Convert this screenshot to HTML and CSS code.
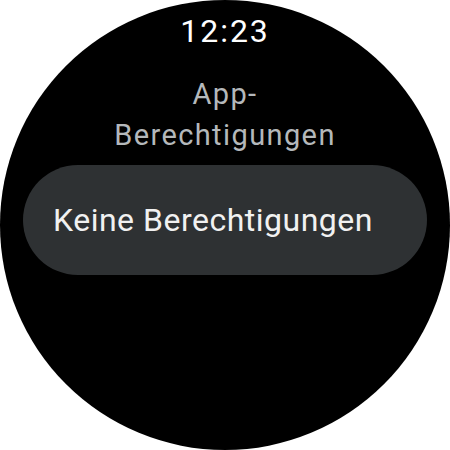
FILE: index.html
```html
<!DOCTYPE html>
<html>
<head>
<meta charset="utf-8">
<link rel="stylesheet" href="styles.css">
</head>
<body>
<div class="watch">
  <div class="time">12:23</div>
  <div class="title">App-<br>Berechtigungen</div>
  <div class="chip">Keine Berechtigungen</div>
</div>
</body>
</html>
```
FILE: styles.css
```css
html, body { margin: 0; padding: 0; background: #fff; }
body { width: 450px; height: 450px; overflow: hidden; font-family: Roboto, "Noto Sans", sans-serif; }
.watch {
  width: 450px; height: 450px; border-radius: 50%; background: #000;
  display: flex; flex-direction: column; align-items: center;
  box-sizing: border-box; padding-top: 11px;
}
.time { color: #fff; font-size: 32px; line-height: 40px; letter-spacing: 2px; }
.title { color: #b4b8bb; font-size: 29px; line-height: 41px; letter-spacing: 1.4px; text-align: center; margin-top: 23px; }
.chip {
  margin-top: 9px; width: 404px; height: 110px; border-radius: 55px; background: #2e3133;
  color: #f1f1f1; font-size: 32px; letter-spacing: 0.5px; box-sizing: border-box; padding-left: 30px;
  display: flex; align-items: center;
}
```
